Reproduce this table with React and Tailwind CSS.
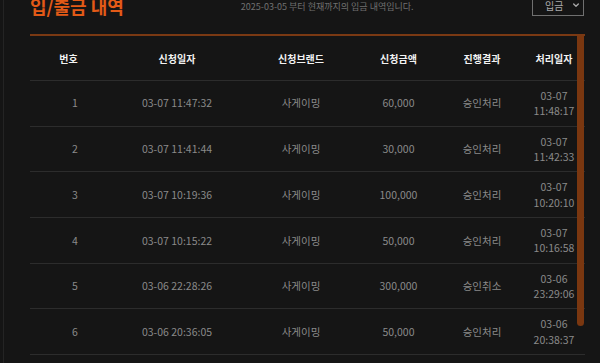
const rows = [
  { no: 1, reqAt: '03-07 11:47:32', brand: '사게이밍', amount: '60,000', status: '승인처리', doneDate: '03-07', doneTime: '11:48:17' },
  { no: 2, reqAt: '03-07 11:41:44', brand: '사게이밍', amount: '30,000', status: '승인처리', doneDate: '03-07', doneTime: '11:42:33' },
  { no: 3, reqAt: '03-07 10:19:36', brand: '사게이밍', amount: '100,000', status: '승인처리', doneDate: '03-07', doneTime: '10:20:10' },
  { no: 4, reqAt: '03-07 10:15:22', brand: '사게이밍', amount: '50,000', status: '승인처리', doneDate: '03-07', doneTime: '10:16:58' },
  { no: 5, reqAt: '03-06 22:28:26', brand: '사게이밍', amount: '300,000', status: '승인취소', doneDate: '03-06', doneTime: '23:29:06' },
  { no: 6, reqAt: '03-06 20:36:05', brand: '사게이밍', amount: '50,000', status: '승인처리', doneDate: '03-06', doneTime: '20:38:37' },
  { no: 7, reqAt: '03-06 19:12:40', brand: '사게이밍', amount: '50,000', status: '승인처리', doneDate: '03-06', doneTime: '19:13:02' },
];

const cols = 'grid grid-cols-[90px_114px_134px_61px_106px_38px]';

export default function App() {
  return (
    <div className="w-[600px] h-[363px] overflow-hidden bg-[#151515] flex font-['Noto_Sans_CJK_KR','Noto_Sans',sans-serif]">
      <div className="w-[3px] shrink-0" />
      <div className="w-px shrink-0 bg-[#242424]" />

      <div className="relative ml-[26px] w-[555px]">
        {/* 상단 */}
        <div className="flex items-start h-[34px]">
          <h1 className="-mt-[5px] text-[18px] leading-[23px] font-bold text-[#e35a17] whitespace-nowrap">입/출금 내역</h1>
          <p className="ml-[117px] mt-px text-[9px] leading-[11px] text-[#707070] whitespace-nowrap">
            2025-03-05 부터 현재까지의 입금 내역입니다.
          </p>
          <div className="ml-auto mr-px -mt-[6px] w-[52px] h-[22px] border border-[#707070] flex items-center justify-between pl-[12px] pr-[3px]">
            <span className="text-[10px] text-[#a8a8a8]">입금</span>
            <svg className="w-[8px] h-[8px] text-[#a8a8a8]" viewBox="0 0 24 24" fill="none" stroke="currentColor" strokeWidth="4" strokeLinecap="round" strokeLinejoin="round">
              <path d="M5 9l7 7 7-7" />
            </svg>
          </div>
        </div>

        {/* 표 */}
        <div className="h-[2px] bg-[#7a3913]" />
        <div className={`${cols} h-[45px] items-center border-b border-[#2c2c2c] text-[10px] font-bold text-[#f2f2f2] text-center`}>
          <div className="pr-[13px]">번호</div>
          <div>신청일자</div>
          <div>신청브랜드</div>
          <div>신청금액</div>
          <div>진행결과</div>
          <div className="flex justify-center whitespace-nowrap">처리일자</div>
        </div>
        {rows.map((r) => (
          <div key={r.no} className={`${cols} h-[45.7px] items-center border-b border-[#2c2c2c] text-[10.5px] text-[#8a8a8a] text-center`}>
            <div>{r.no}</div>
            <div>{r.reqAt}</div>
            <div>{r.brand}</div>
            <div>{r.amount}</div>
            <div>{r.status}</div>
            <div className="flex flex-col items-center leading-[15.5px] whitespace-nowrap">
              <span>{r.doneDate}</span>
              <span>{r.doneTime}</span>
            </div>
          </div>
        ))}

        {/* 스크롤바 */}
        <div className="absolute left-[547px] top-[36px] w-[7px] h-[290px] rounded-b-full bg-[#7a3710]" />
      </div>
    </div>
  );
}
